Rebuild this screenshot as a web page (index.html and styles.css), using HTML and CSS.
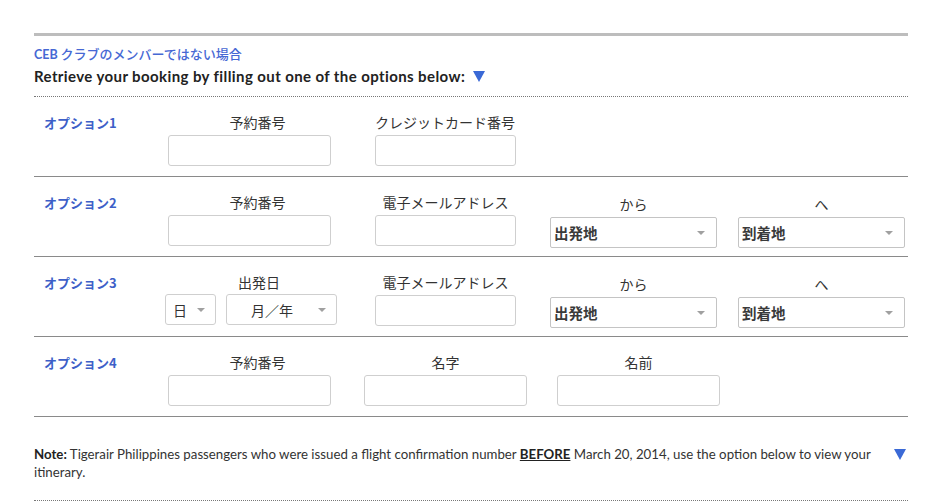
FILE: index.html
```html
<!DOCTYPE html>
<html lang="ja">
<head>
<meta charset="utf-8">
<link rel="stylesheet" href="styles.css">
</head>
<body>
<div class="wrap">
  <div class="intro">
    <div class="club"><span class="ceb">CEB</span> クラブのメンバーではない場合</div>
    <div class="heading">Retrieve your booking by filling out one of the options below: <span class="tri"></span></div>
  </div>

  <div class="row">
    <div class="opt">オプション1</div>
    <div class="field w163"><div class="lbl shift">予約番号</div><div class="input"></div></div>
    <div class="field w141 m44"><div class="lbl wide">クレジットカード番号</div><div class="input"></div></div>
  </div>

  <div class="row">
    <div class="opt">オプション2</div>
    <div class="field w163"><div class="lbl shift">予約番号</div><div class="input"></div></div>
    <div class="field w141 m44"><div class="lbl">電子メールアドレス</div><div class="input"></div></div>
    <div class="field w167 m34 low"><div class="lbl">から</div><div class="select"><span>出発地</span><i class="caret"></i></div></div>
    <div class="field w167 m21 low"><div class="lbl">へ</div><div class="select"><span>到着地</span><i class="caret"></i></div></div>
  </div>

  <div class="row">
    <div class="opt">オプション3</div>
    <div class="field w172 mneg3"><div class="lbl shift">出発日</div>
      <div class="dates">
        <div class="dsel day"><span>日</span><i class="caret"></i></div>
        <div class="dsel month"><span>月／年</span><i class="caret"></i></div>
      </div>
    </div>
    <div class="field w141 m38"><div class="lbl">電子メールアドレス</div><div class="input"></div></div>
    <div class="field w167 m34 low"><div class="lbl">から</div><div class="select"><span>出発地</span><i class="caret"></i></div></div>
    <div class="field w167 m21 low"><div class="lbl">へ</div><div class="select"><span>到着地</span><i class="caret"></i></div></div>
  </div>

  <div class="row">
    <div class="opt">オプション4</div>
    <div class="field w163"><div class="lbl shift">予約番号</div><div class="input"></div></div>
    <div class="field w163 m33"><div class="lbl">名字</div><div class="input"></div></div>
    <div class="field w163 m30"><div class="lbl">名前</div><div class="input"></div></div>
  </div>

  <div class="note">
    <p><b>Note:</b> Tigerair Philippines passengers who were issued a flight confirmation number <b class="u">BEFORE</b> March 20, 2014, use the option below to view your itinerary.</p>
    <span class="tri small"></span>
  </div>
</div>
</body>
</html>
```

FILE: styles.css
```css
* { box-sizing: border-box; }
body {
  margin: 0;
  background: #fff;
  font-family: Lato, "Noto Sans CJK JP", sans-serif;
  color: #333;
}
.wrap {
  width: 874px;
  margin: 33px 0 0 34px;
}
.intro {
  border-top: 3px solid #bdbdbd;
  border-bottom: 1px dotted #777;
  padding: 9px 0 10px;
}
.club {
  font-family: "Noto Sans CJK JP", sans-serif;
  font-size: 13px;
  line-height: 18px;
  font-weight: 500;
  color: #4668d4;
}
.club .ceb {
  font-family: Lato, sans-serif;
  font-weight: 700;
  font-size: 12.5px;
}
.heading {
  margin-top: 2px;
  font-size: 15px;
  letter-spacing: 0.4px;
  line-height: 20px;
  font-weight: 700;
  color: #222;
  display: flex;
  align-items: center;
}
.tri {
  display: inline-block;
  width: 0;
  height: 0;
  border-left: 6px solid transparent;
  border-right: 6px solid transparent;
  border-top: 11px solid #3a69d6;
  margin-left: 8px;
}
.row {
  height: 80px;
  border-bottom: 1px solid #8a8a8a;
  display: flex;
  align-items: flex-start;
}
.opt {
  width: 134px;
  padding: 16px 0 0 10px;
  font-family: "Noto Sans CJK JP", sans-serif;
  font-size: 13px;
  line-height: 20px;
  font-weight: 700;
  color: #3d5fc8;
}
.field {
  padding-top: 15px;
  display: flex;
  flex-direction: column;
}
.field.low { padding-top: 17px; }
.lbl {
  font-family: "Noto Sans CJK JP", sans-serif;
  font-size: 14px;
  line-height: 20px;
  text-align: center;
  color: #333;
  margin-bottom: 3px;
  white-space: nowrap;
}
.lbl.shift { padding-left: 16px; }
.lbl.wide { text-align: left; }
.w141 { width: 141px; }
.w163 { width: 163px; }
.w167 { width: 167px; }
.w172 { width: 172px; }
.m21 { margin-left: 21px; }
.m30 { margin-left: 30px; }
.m33 { margin-left: 33px; }
.m34 { margin-left: 34px; }
.m38 { margin-left: 38px; }
.m44 { margin-left: 44px; }
.mneg3 { margin-left: -3px; }
.input {
  height: 31px;
  border: 1px solid #cfcfcf;
  border-radius: 3px;
  background: #fff;
}
.select {
  height: 31px;
  border: 1px solid #c4c4c4;
  border-radius: 2px;
  display: flex;
  align-items: center;
  justify-content: space-between;
  padding: 0 11px 0 3px;
  font-family: "Noto Sans CJK JP", sans-serif;
  font-size: 14.5px;
  font-weight: 700;
  color: #3a3a3a;
}
.caret {
  width: 0;
  height: 0;
  border-left: 4px solid transparent;
  border-right: 4px solid transparent;
  border-top: 4px solid #a0a0a0;
}
.dates {
  display: flex;
  gap: 10px;
  margin-top: -1px;
}
.dsel {
  height: 31px;
  border: 1px solid #cfcfcf;
  border-radius: 3px;
  display: flex;
  align-items: center;
  font-family: "Noto Sans CJK JP", sans-serif;
  font-size: 14px;
  color: #333;
}
.dsel.day {
  width: 51px;
  padding: 0 10px 0 7px;
  justify-content: space-between;
}
.dsel.month {
  width: 111px;
  padding: 0 10px 0 24px;
  justify-content: space-between;
}
.note {
  display: flex;
  align-items: flex-start;
  justify-content: space-between;
  padding: 28px 2px 19px 0;
  border-bottom: 1px dotted #777;
}
.note p {
  margin: 0;
  width: 850px;
  font-size: 13.25px;
  line-height: 18px;
  color: #333;
}
.note b { font-weight: 700; color: #222; }
.note .u { text-decoration: underline; }
.tri.small {
  margin-top: 4px;
  border-top-width: 11px;
}
```
